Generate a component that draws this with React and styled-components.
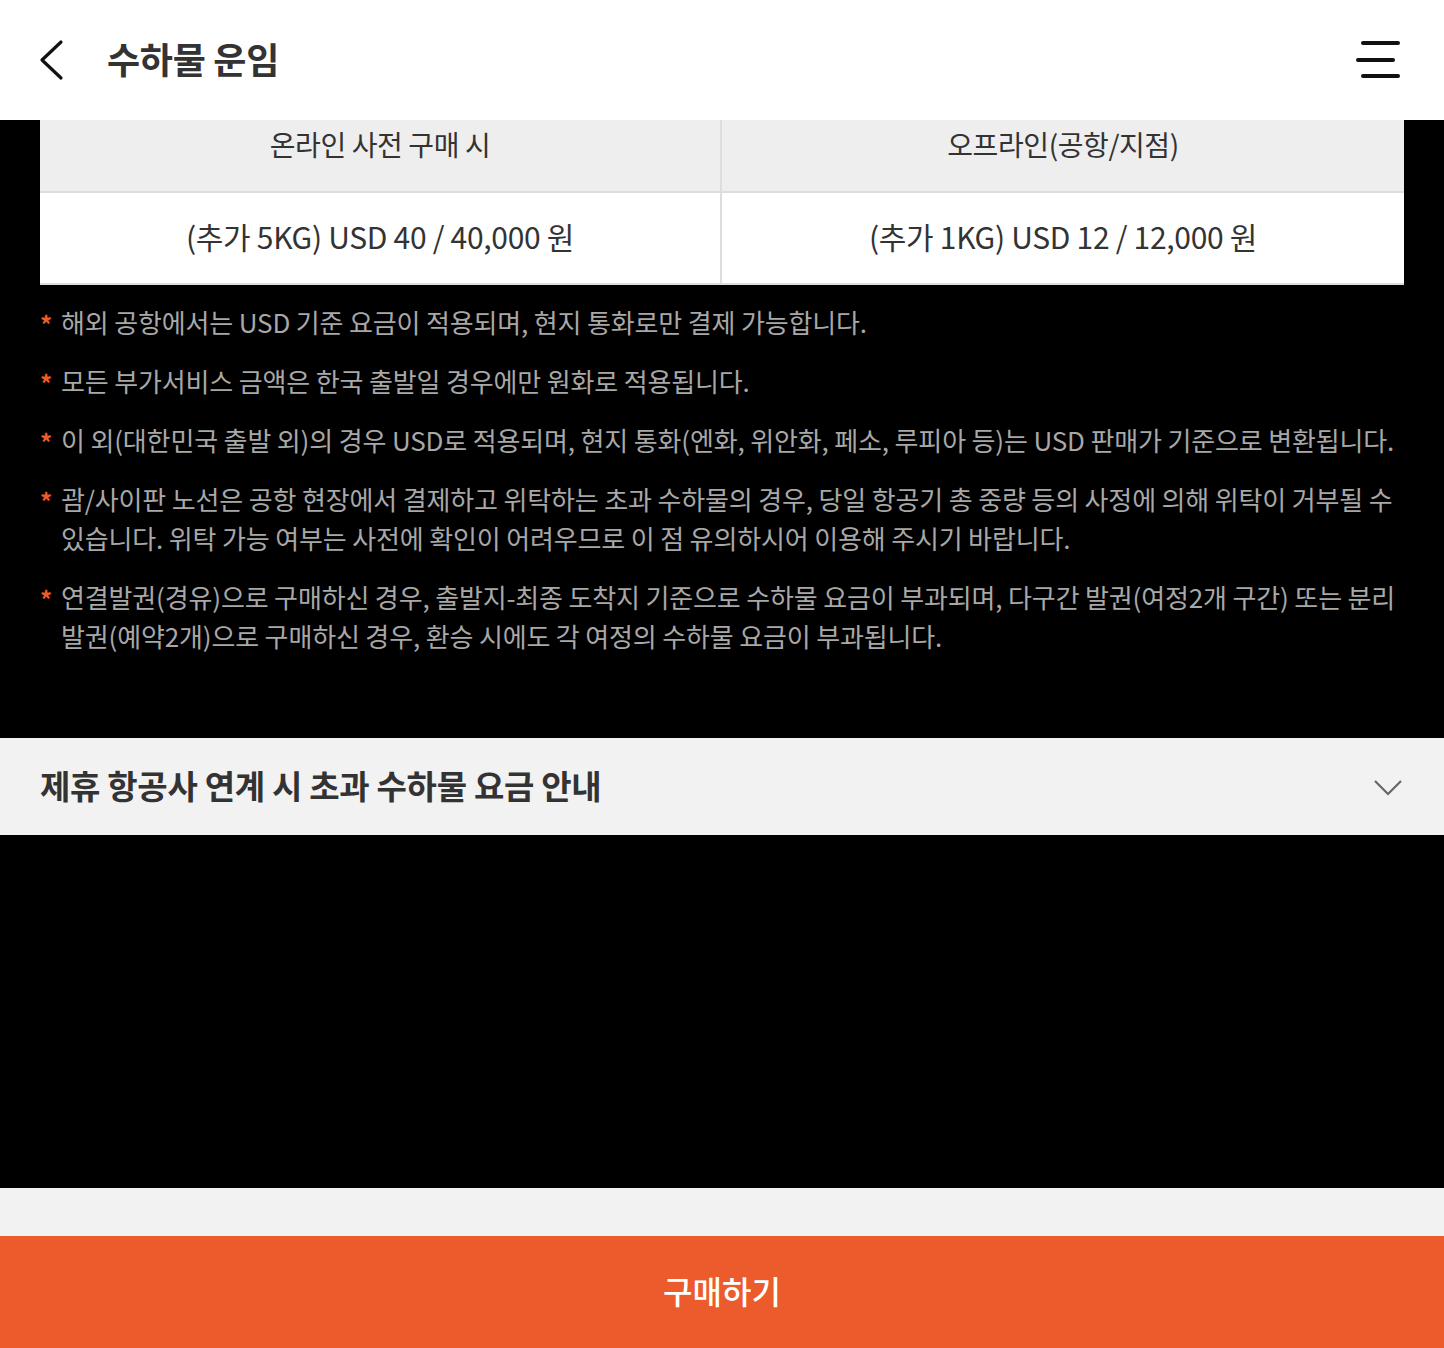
import React from "react";
import styled, { createGlobalStyle } from "styled-components";

const GlobalStyle = createGlobalStyle`
    * { box-sizing: border-box; }
    body {
        margin: 0;
        background: #000000;
        font-family: "Noto Sans CJK KR", "Noto Sans", sans-serif;
    }
`;

const notes = [
    "해외 공항에서는 USD 기준 요금이 적용되며, 현지 통화로만 결제 가능합니다.",
    "모든 부가서비스 금액은 한국 출발일 경우에만 원화로 적용됩니다.",
    "이 외(대한민국 출발 외)의 경우 USD로 적용되며, 현지 통화(엔화, 위안화, 페소, 루피아 등)는 USD 판매가 기준으로 변환됩니다.",
    "괌/사이판 노선은 공항 현장에서 결제하고 위탁하는 초과 수하물의 경우, 당일 항공기 총 중량 등의 사정에 의해 위탁이 거부될 수 있습니다. 위탁 가능 여부는 사전에 확인이 어려우므로 이 점 유의하시어 이용해 주시기 바랍니다.",
    "연결발권(경유)으로 구매하신 경우, 출발지-최종 도착지 기준으로 수하물 요금이 부과되며, 다구간 발권(여정2개 구간) 또는 분리 발권(예약2개)으로 구매하신 경우, 환승 시에도 각 여정의 수하물 요금이 부과됩니다.",
];

function App() {
    return (
        <Page>
            <GlobalStyle />
            <Header>
                <HeaderLeft>
                    <IconButton aria-label="뒤로">
                        <svg width="40" height="48" viewBox="0 0 40 48">
                            <polyline points="25,6 6,24 25,42" fill="none" stroke="#111" strokeWidth="3.2" strokeLinecap="round" strokeLinejoin="round" />
                        </svg>
                    </IconButton>
                    <Title>수하물 운임</Title>
                </HeaderLeft>
                <IconButton aria-label="메뉴">
                    <svg width="46" height="40" viewBox="0 0 46 40">
                        <line x1="8" y1="3" x2="43" y2="3" stroke="#111" strokeWidth="4" strokeLinecap="round" />
                        <line x1="3" y1="20" x2="38" y2="20" stroke="#111" strokeWidth="4" strokeLinecap="round" />
                        <line x1="8" y1="36" x2="43" y2="36" stroke="#111" strokeWidth="4" strokeLinecap="round" />
                    </svg>
                </IconButton>
            </Header>

            <Content>
                <Table>
                    <HeadCell>온라인 사전 구매 시</HeadCell>
                    <HeadCell last>오프라인(공항/지점)</HeadCell>
                    <BodyCell>(추가 5KG) USD 40 / 40,000 원</BodyCell>
                    <BodyCell last>(추가 1KG) USD 12 / 12,000 원</BodyCell>
                </Table>

                <NoteList>
                    {notes.map(note => <Note key={note}>{note}</Note>)}
                </NoteList>
            </Content>

            <Accordion>
                <AccordionTitle>제휴 항공사 연계 시 초과 수하물 요금 안내</AccordionTitle>
                <svg width="30" height="18" viewBox="0 0 30 18">
                    <polyline points="2,3 15,16 28,3" fill="none" stroke="#666" strokeWidth="2.2" />
                </svg>
            </Accordion>

            <EmptyPanel />

            <BottomBar>
                <BuyButton>구매하기</BuyButton>
            </BottomBar>
        </Page>
    );
}

export default App;

const Page = styled.div`
    width: 100%;
    min-height: 100vh;
    display: flex;
    flex-direction: column;
    background: #000000;
`;

const Header = styled.div`
    height: 120px;
    background: #FFFFFF;
    display: flex;
    align-items: center;
    justify-content: space-between;
    padding: 0 43px 0 36px;
`;

const HeaderLeft = styled.div`
    display: flex;
    align-items: center;
    gap: 31px;
`;

const IconButton = styled.button`
    border: none;
    background: none;
    padding: 0;
    display: flex;
    align-items: center;
    cursor: pointer;
`;

const Title = styled.h1`
    margin: 0 0 4px;
    font-size: 36px;
    font-weight: 700;
    color: #333333;
    letter-spacing: -0.3px;
`;

const Content = styled.div`
    padding: 0 40px 83px;
`;

const Table = styled.div`
    display: grid;
    grid-template-columns: 1fr 1fr;
    border-bottom: 2px solid #dddddd;
`;

const HeadCell = styled.div`
    height: 73px;
    display: flex;
    align-items: center;
    justify-content: center;
    padding-bottom: 24px;
    background: #EEEEEE;
    border-bottom: 2px solid #dddddd;
    border-right: ${props => props.last ? "none" : "2px solid #dddddd"};
    font-size: 28px;
    color: #333333;
    letter-spacing: -0.4px;
`;

const BodyCell = styled.div`
    height: 90px;
    display: flex;
    align-items: center;
    justify-content: center;
    padding-bottom: 4px;
    background: #FFFFFF;
    border-right: ${props => props.last ? "none" : "2px solid #dddddd"};
    font-size: 30px;
    color: #333333;
    letter-spacing: -0.3px;
`;

const NoteList = styled.ul`
    list-style: none;
    margin: 0;
    padding: 17px 0 0;
    display: flex;
    flex-direction: column;
    gap: 20px;
`;

const Note = styled.li`
    position: relative;
    padding-left: 21px;
    font-size: 26px;
    line-height: 39px;
    color: #A8A8A8;
    letter-spacing: -0.15px;
    word-break: keep-all;

    &::before {
        content: "*";
        position: absolute;
        left: 0;
        top: 2px;
        color: #EE5B2B;
        font-size: 24px;
        font-weight: 700;
    }
`;

const Accordion = styled.div`
    height: 97px;
    background: #F2F2F2;
    display: flex;
    align-items: center;
    justify-content: space-between;
    padding: 0 41px 0 40px;
`;

const AccordionTitle = styled.h2`
    margin: 0 0 4px;
    font-size: 33px;
    font-weight: 700;
    color: #333333;
    letter-spacing: -0.3px;
`;

const EmptyPanel = styled.div`
    height: 353px;
    background: #000000;
`;

const BottomBar = styled.div`
    padding-top: 48px;
    background: #F2F2F2;
`;

const BuyButton = styled.button`
    width: 100%;
    height: 112px;
    padding-bottom: 6px;
    border: none;
    background: #EC5B2B;
    color: #FFFFFF;
    font-family: "Noto Sans CJK KR", "Noto Sans", sans-serif;
    font-size: 32px;
    font-weight: 500;
    cursor: pointer;
`;
